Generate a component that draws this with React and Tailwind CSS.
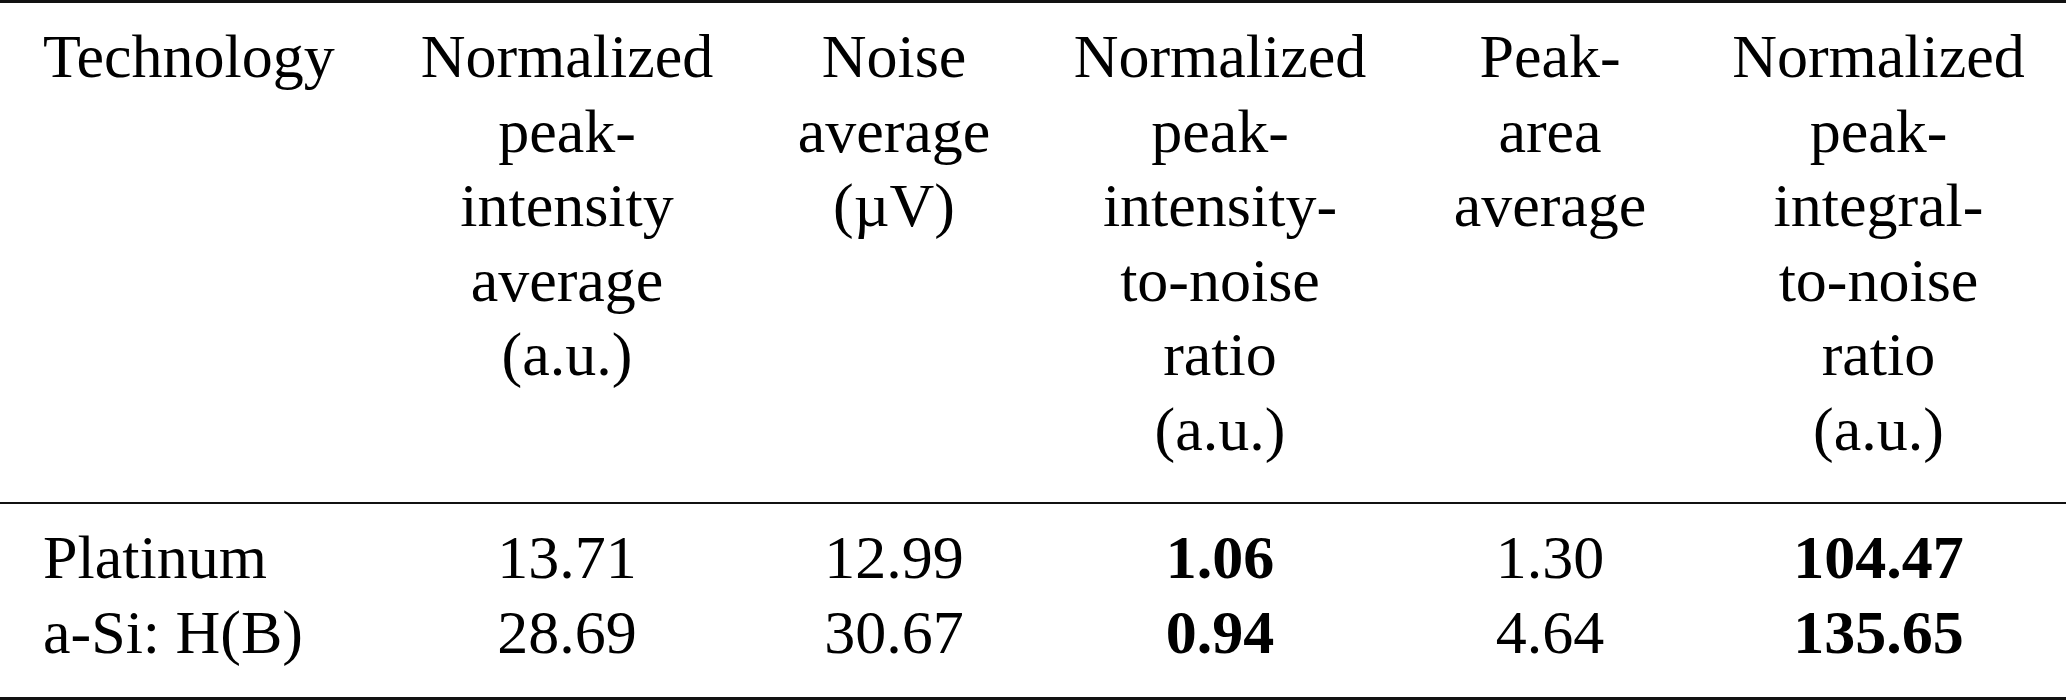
import React from 'react';

const headers = [
  ['Technology'],
  ['Normalized', 'peak-', 'intensity', 'average', '(a.u.)'],
  ['Noise', 'average', '(µV)'],
  ['Normalized', 'peak-', 'intensity-', 'to-noise', 'ratio', '(a.u.)'],
  ['Peak-', 'area', 'average'],
  ['Normalized', 'peak-', 'integral-', 'to-noise', 'ratio', '(a.u.)'],
];

const rows = [
  ['Platinum', '13.71', '12.99', '1.06', '1.30', '104.47'],
  ['a-Si: H(B)', '28.69', '30.67', '0.94', '4.64', '135.65'],
];

const boldCols = [3, 5];

function App() {
  return (
    <div className="w-[2067px] h-[700px] bg-white text-black font-['Liberation_Serif',serif] text-[62px] leading-[74.5px]">
      <div className="w-[2066px] border-t-[3px] border-b-[3px] border-[#111]">
        {/* header */}
        <div className="grid grid-cols-[377px_380px_274px_378px_282px_375px] pt-[16px] pb-[36px] border-b-2 border-[#111]">
          {headers.map((lines, i) => (
            <div key={i} className={i === 0 ? 'pl-[43px] text-left' : 'text-center'}>
              {lines.map((line, j) => (
                <div key={j} className="whitespace-nowrap">{line}</div>
              ))}
            </div>
          ))}
        </div>

        {/* body */}
        <div className="pt-[16px] pb-[28px]">
          {rows.map((row, r) => (
            <div key={r} className="grid grid-cols-[377px_380px_274px_378px_282px_375px]">
              {row.map((cell, i) => (
                <div
                  key={i}
                  className={`whitespace-nowrap ${i === 0 ? 'pl-[43px] text-left' : 'text-center'} ${
                    boldCols.includes(i) ? 'font-bold' : ''
                  }`}
                >
                  {cell}
                </div>
              ))}
            </div>
          ))}
        </div>
      </div>
    </div>
  );
}

export default App;
